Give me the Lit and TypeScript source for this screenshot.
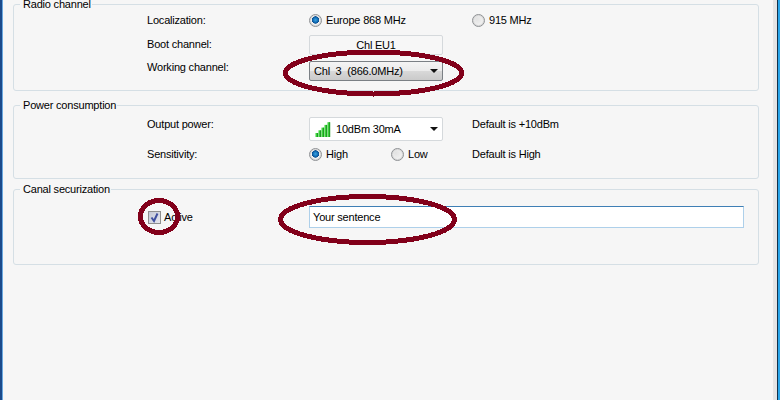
import { LitElement, html, css, svg } from 'lit';
import { customElement } from 'lit/decorators.js';

const radio = (on: boolean, label: string) => html`
  <span class="radio-item">
    <span class="radio ${on ? 'on' : ''}"></span>${label}
  </span>
`;

const arrow = html`<span class="arrow"></span>`;

// signal bars of the output power combo
const signalIcon = html`
  <svg class="signal" width="16" height="15" viewBox="0 0 16 15">
    ${[0, 1, 2, 3, 4].map(i => svg`
      <rect x=${i * 3 + 0.5} y=${11 - i * 2.7} width="2.2" height=${4 + i * 2.7} fill="#3ad43a"></rect>
      <rect x=${i * 3 + 2.2} y=${11 - i * 2.7} width="1" height=${4 + i * 2.7} fill="#0a8a12"></rect>
    `)}
  </svg>
`;

@customElement('app-root')
export class AppRoot extends LitElement {
  static styles = css`
    :host {
      display: block;
      position: relative;
      width: 780px;
      height: 400px;
      overflow: hidden;
      background: #f6f6f6;
      font-family: "Liberation Sans", Arial, sans-serif;
      font-size: 11px;
      letter-spacing: -0.2px;
      color: #000;
      /* window frame */
      box-shadow:
        inset 2px 0 #1b4a8a,
        inset 3px 0 #6aa9e0,
        inset -2px 0 #2aa6ea,
        inset -3px 0 #12304a,
        inset -7px 0 #e4e4e4;
    }
    .page {
      display: flex;
      flex-direction: column;
      margin-top: -2px;
      padding: 0 21px 0 13px;
    }
    fieldset {
      margin: 0;
      padding: 0;
      border: 1px solid #d5dfe5;
      border-radius: 3px;
      min-width: 0;
      box-sizing: border-box;
    }
    .fs-radio { height: 93px; margin-bottom: 8px; }
    .fs-power { height: 80px; margin-bottom: 4px; }
    .fs-secure { height: 82px; }
    legend {
      margin-left: 6px;
      padding: 0 1px 0 3px;
      line-height: 13px;
      white-space: nowrap;
    }
    .grid {
      display: grid;
      grid-template-columns: 162px 163px 1fr;
      padding-left: 133px;
      align-items: center;
    }
    .radio-item {
      display: inline-flex;
      align-items: center;
      gap: 4px;
    }
    .radio {
      width: 11px;
      height: 11px;
      border-radius: 50%;
      border: 1px solid #8e9194;
      background: radial-gradient(circle at 35% 35%, #e2e2e2, #f8f8f8);
      box-shadow: inset 0 0 0 1px #d8d8d8;
      flex: none;
    }
    .radio.on {
      background: radial-gradient(circle at 50% 45%, #38a5e4 0, #0b5fa8 36%, #0b4d8c 42%, #f1f1f1 48%);
    }
    .combo {
      width: 134px;
      box-sizing: border-box;
      display: flex;
      align-items: center;
      border: 1px solid #d5d9dc;
      border-radius: 2px;
      padding: 0 4px 0 4px;
      background: #fff;
    }
    .static {
      height: 20px;
      justify-content: center;
      background: #f7f7f7;
      padding: 0;
    }
    .working {
      height: 20px;
      align-self: end;
      border-color: #7b8085;
      background: linear-gradient(#f4f4f4, #ebebeb 48%, #d8d8d8 52%, #cacaca);
    }
    .power {
      height: 24px;
      padding-left: 5px;
      gap: 5px;
    }
    .combo .value { flex: 1; white-space: pre; }
    .arrow {
      width: 0;
      height: 0;
      border-left: 4px solid transparent;
      border-right: 4px solid transparent;
      border-top: 4px solid #111;
    }
    .radio-row {
      display: grid;
      grid-template-columns: 82px 1fr;
    }
    .radio-group {
      row-gap: 4px;
      grid-template-rows: 20px 20px 22px;
    }
    .label-up { margin-bottom: 2px; }
    .working-label {
      align-self: start;
      margin-top: 2px;
    }
    .power-group {
      row-gap: 4px;
      grid-template-rows: 29px 18px;
    }
    .top {
      align-self: start;
      margin-top: 5px;
    }
    .top-text {
      align-self: start;
      margin-top: 6px;
    }
    .secure-group {
      grid-template-columns: 162px 1fr;
      padding-top: 10px;
    }
    .check-item {
      display: inline-flex;
      align-items: center;
      gap: 3px;
      margin-left: 1px;
    }
    .check {
      width: 11px;
      height: 11px;
      border: 1px solid #8f8f8f;
      background: linear-gradient(135deg, #c4c8d6, #e6e7ee);
      display: inline-flex;
    }
    .sentence {
      height: 22px;
      box-sizing: border-box;
      margin-right: 14px;
      padding: 0 3px;
      display: flex;
      align-items: center;
      background: #fff;
      border: 1px solid #aed0ea;
      border-top-color: #3f7fb5;
    }
    .marks {
      position: absolute;
      left: 0;
      top: 0;
      pointer-events: none;
    }
  `;

  render() {
    return html`
      <div class="page">
        <fieldset class="fs-radio">
          <legend>Radio channel</legend>
          <div class="grid radio-group">
            <span class="label-up">Localization:</span>
            <span>${radio(true, 'Europe 868 MHz')}</span>
            <span>${radio(false, '915 MHz')}</span>
            <span class="label-up">Boot channel:</span>
            <span class="combo static">Chl EU1</span>
            <span></span>
            <span class="working-label">Working channel:</span>
            <span class="combo working"><span class="value">Chl  3  (866.0MHz)</span>${arrow}</span>
            <span></span>
          </div>
        </fieldset>
        <fieldset class="fs-power">
          <legend>Power consumption</legend>
          <div class="grid power-group">
            <span class="top-text">Output power:</span>
            <span class="combo power top">${signalIcon}<span class="value">10dBm 30mA</span>${arrow}</span>
            <span class="top-text">Default is +10dBm</span>
            <span>Sensitivity:</span>
            <span class="radio-row">${radio(true, 'High')}${radio(false, 'Low')}</span>
            <span>Default is High</span>
          </div>
        </fieldset>
        <fieldset class="fs-secure">
          <legend>Canal securization</legend>
          <div class="grid secure-group">
            <span class="check-item">
              <span class="check">
                <svg width="11" height="11" viewBox="0 0 11 11">
                  <path d="M2.5 5.5 L5 9 L8.5 1.5" fill="none" stroke="#3f4f9f" stroke-width="2"></path>
                </svg>
              </span>
              Active
            </span>
            <span class="sentence">Your sentence</span>
          </div>
        </fieldset>
      </div>
      <svg class="marks" width="780" height="400" shape-rendering="crispEdges">
        <g fill="none" stroke="#82001a" stroke-width="5">
          <ellipse cx="373.5" cy="73" rx="88" ry="21"></ellipse>
          <ellipse cx="159" cy="216.5" rx="18.5" ry="16"></ellipse>
          <ellipse cx="367.5" cy="219.5" rx="87" ry="23"></ellipse>
        </g>
      </svg>
    `;
  }
}
